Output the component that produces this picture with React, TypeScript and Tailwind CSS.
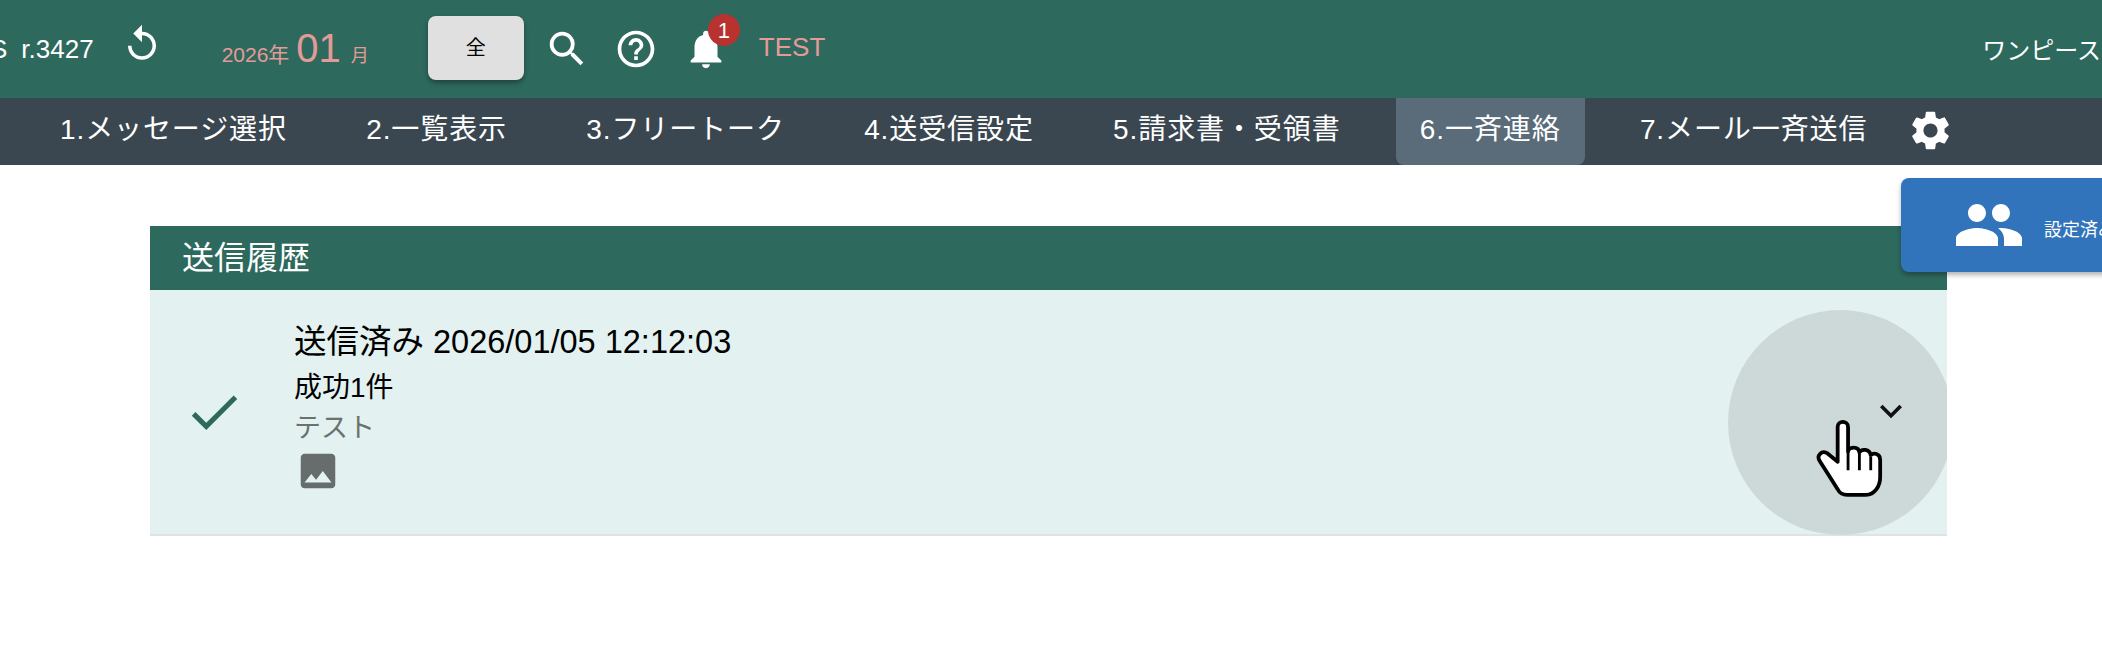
import { MdCheck, MdExpandMore, MdHelpOutline, MdImage, MdNotifications, MdPeople, MdReplay, MdSearch, MdSettings } from "react-icons/md";

const NAV_ITEMS = ["1.メッセージ選択", "2.一覧表示", "3.フリートーク", "4.送受信設定", "5.請求書・受領書"];

// hand cursor sits on top of the expand button
function HandCursor() {
  return (
    <svg viewBox="0 0 72 84" className="w-[68px] h-[82px]">
      <path
        d="M24 8c0-7 11-7 11 0v26c1-5 11-6 12 1 2-4 11-4 12 3 3-3 10-2 10 5v18c0 10-6 19-15 19H34c-5 0-8-2-10-6L5 44c-4-6 3-12 8-8l11 9z"
        fill="#fff"
        stroke="#000"
        strokeWidth="4"
        strokeLinejoin="round"
      />
      <path d="M35 34v20M47 36v18M59 40v14" fill="none" stroke="#000" strokeWidth="3" />
    </svg>
  );
}

export default function App() {
  return (
    <div className="relative w-[2102px] h-[645px] overflow-hidden bg-white font-['Liberation_Sans','Noto_Sans_CJK_JP',sans-serif]">
      <header className="flex items-center h-[98px] bg-[#2e695d] text-white">
        <span className="ml-[-10px] text-[26px]">S</span>
        <span className="ml-[14px] text-[26px]">r.3427</span>
        <MdReplay className="ml-[27px] mt-[-10px] text-[42px]" />
        <div className="flex items-baseline ml-[59px] text-[#e49b98]">
          <span className="text-[21px]">2026年</span>
          <span className="ml-[7px] text-[40px] leading-none">01</span>
          <span className="ml-[10px] text-[18px]">月</span>
        </div>
        <button className="flex items-center justify-center ml-[59px] mt-[-2px] w-[96px] h-[64px] rounded-lg bg-[#e0e0e0] text-black text-[20px] shadow-[0_3px_5px_rgba(0,0,0,0.35)]">
          全
        </button>
        <MdSearch className="ml-[20px] text-[46px]" />
        <MdHelpOutline className="ml-[24px] text-[44px]" />
        <div className="relative ml-[25px]">
          <MdNotifications className="text-[46px]" />
          <span className="absolute top-[-12px] right-[-11px] flex items-center justify-center w-[32px] h-[32px] rounded-full bg-[#b83330] text-[22px]">
            1
          </span>
        </div>
        <span className="ml-[30px] mt-[-4px] text-[#e49b98] text-[26px]">TEST</span>
        <span className="ml-auto mt-[4px] mr-[1px] text-[24px] whitespace-nowrap">ワンピース</span>
      </header>

      <nav className="flex items-stretch h-[67px] pl-[60px] gap-[79.3px] bg-[#3b4750] text-white text-[28px] tracking-[0.9px] leading-[64px]">
        {NAV_ITEMS.map((label) => (
          <span key={label} className="whitespace-nowrap">
            {label}
          </span>
        ))}
        <span className="ml-[-24px] mr-[-24px] px-[24px] rounded-b-lg bg-[#5a6b79] whitespace-nowrap">6.一斉連絡</span>
        <span className="whitespace-nowrap">7.メール一斉送信</span>
        <span className="flex items-center ml-[-40px] mt-[-3px]">
          <MdSettings className="text-[47px]" />
        </span>
      </nav>

      <section className="mt-[61px] ml-[150px] w-[1797px]">
        <h2 className="flex items-center h-[64px] pl-[32px] bg-[#2e695d] text-white text-[32px] font-normal">送信履歴</h2>
        <div className="flex items-center h-[246px] bg-[#e3f1f0] border-b-2 border-[#dfe3e3]">
          <MdCheck className="ml-[33px] text-[62px] text-[#2e695d]" />
          <div className="flex flex-col ml-[49px] mt-[-14px] text-black">
            <span className="text-[32.5px] leading-[52px]">送信済み 2026/01/05 12:12:03</span>
            <span className="text-[28px] leading-[40px]">成功1件</span>
            <span className="text-[27px] leading-[40px] text-[#6a7270]">テスト</span>
            <MdImage className="ml-[1px] text-[46px] text-[#666d6c]" />
          </div>
        </div>
      </section>

      {/* ripple on the expand button, clipped by the panel's right edge */}
      <div className="absolute left-[150px] top-[290px] w-[1797px] h-[245px] overflow-hidden">
        <div className="absolute left-[1578px] top-[20px] w-[225px] h-[225px] rounded-full bg-[#ccd9d8]" />
        <MdExpandMore className="absolute left-[1719px] top-[99px] text-[44px] text-[#111]" />
      </div>
      <div className="absolute left-[1815px] top-[418px]">
        <HandCursor />
      </div>

      <aside className="absolute left-[1901px] top-[178px] flex items-center w-[300px] h-[94px] pl-[52px] rounded-l-lg bg-[#3274bb] text-white shadow-[0_3px_5px_rgba(0,0,0,0.3)]">
        <MdPeople className="text-[72px]" />
        <span className="ml-[19px] mt-[10px] text-[18px] whitespace-nowrap">設定済み</span>
      </aside>
    </div>
  );
}
